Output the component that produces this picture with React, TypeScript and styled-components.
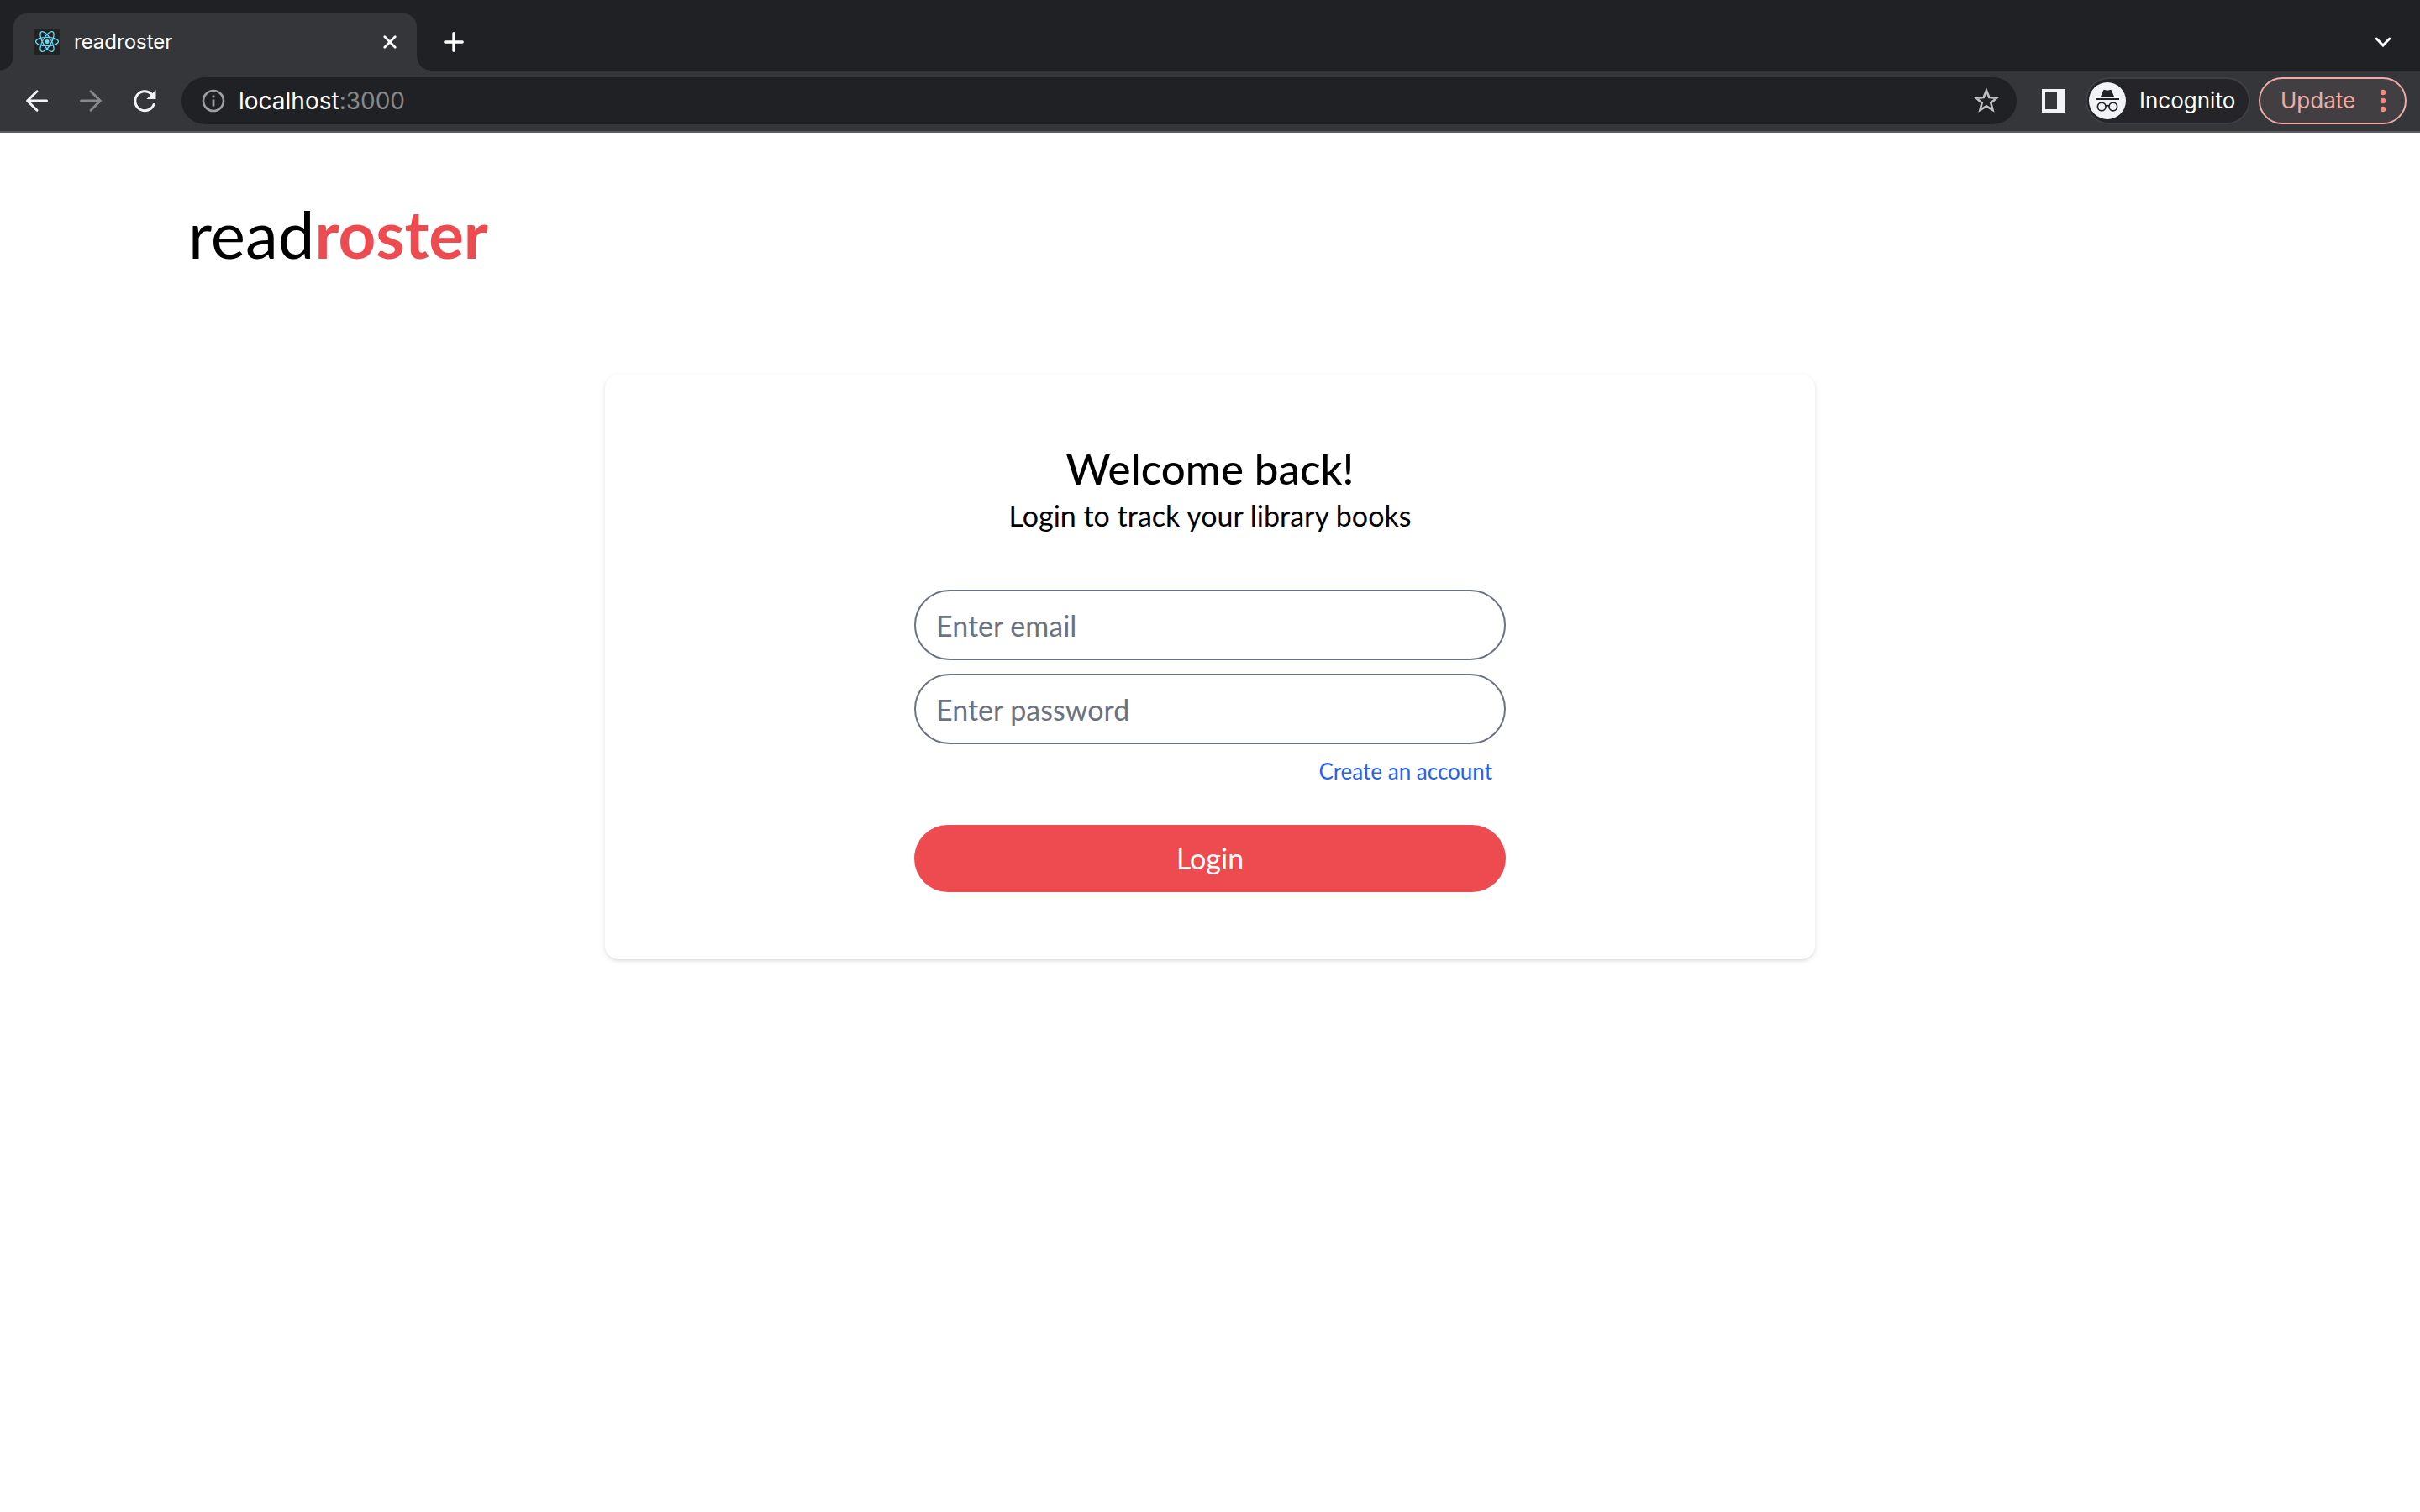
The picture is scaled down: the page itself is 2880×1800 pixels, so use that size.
import React from "react";
import styled, { createGlobalStyle } from "styled-components";

const color = {
  frame: "#202124",
  toolbar: "#35363a",
  toolbarLine: "#5d5e62",
  icon: "#f1f3f4",
  iconDim: "#87888a",
  muted: "#9aa0a6",
  update: "#eeaca5",
  updateDot: "#f28b82",
  brand: "#ee4b50",
  gray: "#6b7280",
  link: "#2563eb",
};

const GlobalStyle = createGlobalStyle`
  *, *::before, *::after { box-sizing: border-box; }
  body { margin: 0; background: #fff; }
  button, input { font: inherit; color: inherit; margin: 0; }
  button { border: 0; padding: 0; background: none; cursor: pointer; }
  svg { display: block; flex: none; }
`;

const Browser = styled.div`
  min-height: 100vh;
  display: flex;
  flex-direction: column;
  font-family: Inter, "Liberation Sans", sans-serif;
`;

const TabStrip = styled.div`
  display: flex;
  align-items: flex-end;
  height: 84px;
  padding: 0 24px 0 16px;
  background: ${color.frame};
`;

const Tab = styled.div`
  position: relative;
  display: flex;
  align-items: center;
  gap: 16px;
  width: 480px;
  height: 68px;
  padding: 0 24px;
  border-radius: 16px 16px 0 0;
  background: ${color.toolbar};
  color: #fff;
  font-size: 24px;
  line-height: 32px;

  &::before,
  &::after {
    content: "";
    position: absolute;
    bottom: 0;
    width: 16px;
    height: 16px;
  }
  &::before {
    right: 100%;
    background: radial-gradient(circle at 0 0, ${color.frame} 15px, ${color.toolbar} 16px);
  }
  &::after {
    left: 100%;
    background: radial-gradient(circle at 100% 0, ${color.frame} 15px, ${color.toolbar} 16px);
  }
`;

const TabTitle = styled.span`
  flex: 1;
`;

const IconButton = styled.button<{ $w?: number; $h?: number; $color?: string }>`
  display: flex;
  align-items: center;
  justify-content: center;
  flex: none;
  width: ${(p) => p.$w ?? 32}px;
  height: ${(p) => p.$h ?? 32}px;
  color: ${(p) => p.$color ?? color.icon};
`;

const Spacer = styled.div`
  flex: 1;
`;

const Toolbar = styled.div`
  display: flex;
  align-items: center;
  height: 74px;
  padding: 0 16px 0 12px;
  border-bottom: 2px solid ${color.toolbarLine};
  background: ${color.toolbar};
  font-size: 26px;
  line-height: 32px;
`;

const Address = styled.div`
  flex: 1;
  display: flex;
  align-items: center;
  gap: 16px;
  height: 56px;
  margin: 0 14px 0 12px;
  padding: 0 20px 0 24px;
  border-radius: 28px;
  background: ${color.frame};
  color: #fff;
`;

const Url = styled.div`
  flex: 1;
  font-size: 28px;
`;

const Port = styled.span`
  color: ${color.iconDim};
`;

const Chip = styled.button`
  display: flex;
  align-items: center;
  gap: 16px;
  width: 196px;
  height: 56px;
  margin-left: 8px;
  padding: 0 2px;
  border: 2px solid #3f4045;
  border-radius: 28px;
  background: #252529;
  color: #fff;
`;

const UpdateButton = styled.button`
  display: flex;
  align-items: center;
  justify-content: space-between;
  width: 176px;
  height: 56px;
  margin-left: 10px;
  padding: 0 22px 0 24px;
  border: 2px solid ${color.update};
  border-radius: 28px;
  background: #423f42;
  color: ${color.update};
`;

const Page = styled.main`
  flex: 1;
  display: flex;
  flex-direction: column;
  align-items: center;
  gap: 128px;
  padding-top: 80px;
  background: #fff;
  color: #000;
  font-family: Lato, "Liberation Sans", sans-serif;
`;

const Header = styled.header`
  display: flex;
  width: 100%;
  padding: 0 224px;
`;

const Logo = styled.a`
  color: #000;
  font-size: 78px;
  line-height: 80px;
  text-decoration: none;

  strong {
    color: ${color.brand};
    font-weight: 700;
  }
`;

const Card = styled.section`
  display: flex;
  flex-direction: column;
  align-items: center;
  width: 50%;
  padding: 80px;
  border-radius: 16px;
  background: #fff;
  box-shadow: 0 2px 6px rgba(0, 0, 0, 0.1), 0 2px 4px -2px rgba(0, 0, 0, 0.1);
`;

const Title = styled.h1`
  margin: 0;
  font-size: 51px;
  font-weight: 500;
  line-height: 64px;
`;

const Subtitle = styled.p`
  margin: 0 0 64px;
  font-size: 34px;
  line-height: 48px;
`;

const Form = styled.form`
  display: flex;
  flex-direction: column;
  gap: 16px;
  width: 55%;
  font-size: 34px;
  line-height: 48px;
`;

const Field = styled.input`
  width: 100%;
  height: 84px;
  padding: 0 24px;
  border: 2px solid ${color.gray};
  border-radius: 42px;
  background: #fff;
  outline: none;

  &::placeholder {
    color: ${color.gray};
    opacity: 1;
  }
`;

const CreateLink = styled.a`
  align-self: flex-end;
  margin: 0 16px 32px 0;
  color: ${color.link};
  font-size: 26px;
  line-height: 32px;
  text-decoration: none;
`;

const Submit = styled.button`
  height: 80px;
  border-radius: 40px;
  background: ${color.brand};
  color: #fff;
`;

const ReactFavicon = () => (
  <svg width="32" height="32" viewBox="0 0 32 32" fill="none" aria-hidden="true">
    <rect width="32" height="32" rx="3" fill="#222" />
    <g stroke="#61dafb" strokeWidth="1.3">
      <ellipse cx="16" cy="15.5" rx="13.4" ry="5.1" />
      <ellipse cx="16" cy="15.5" rx="13.4" ry="5.1" transform="rotate(60 16 15.5)" />
      <ellipse cx="16" cy="15.5" rx="13.4" ry="5.1" transform="rotate(120 16 15.5)" />
    </g>
    <circle cx="16" cy="15.5" r="2.5" fill="#61dafb" />
  </svg>
);

const Arrow = ({ back }: { back?: boolean }) => (
  <svg width="28" height="28" viewBox="0 0 28 28" fill="none" stroke="currentColor" strokeWidth="3" strokeLinecap="round" strokeLinejoin="round">
    <path d={back ? "M25.5 14H3M14 2.8L2.6 14L14 25.2" : "M2.5 14H25M14 2.8L25.4 14L14 25.2"} />
  </svg>
);

const Reload = () => (
  <svg width="28" height="28" viewBox="0 0 28 28" fill="none">
    <path d="M25 18.5A11.5 11.5 0 1 1 22.2 5.8" stroke="currentColor" strokeWidth="3" strokeLinecap="round" />
    <path d="M27.5 1V12H16.5Z" fill="currentColor" />
  </svg>
);

const Info = () => (
  <svg width="28" height="28" viewBox="0 0 28 28" fill="none" aria-hidden="true">
    <circle cx="14" cy="14" r="12" stroke={color.muted} strokeWidth="2.6" />
    <path d="M12.6 12.6h2.8v8h-2.8zM12.6 7.4h2.8v2.8h-2.8z" fill={color.muted} />
  </svg>
);

const Star = () => (
  <svg width="32" height="32" viewBox="0 0 32 32" fill="none">
    <path d="M16 3.8L19.3 12.1L28.2 12.7L21.3 18.4L23.5 27L16 22.3L8.5 27L10.7 18.4L3.8 12.7L12.7 12.1Z" stroke="currentColor" strokeWidth="2.6" />
  </svg>
);

const SidePanel = () => (
  <svg width="28" height="28" viewBox="0 0 28 28">
    <path d="M0 0H28V28H0ZM4 4V24H18V4Z" fill="currentColor" fillRule="evenodd" />
  </svg>
);

const Spy = () => (
  <svg width="44" height="44" viewBox="0 0 44 44" fill="none" aria-hidden="true">
    <circle cx="22" cy="22" r="22" fill="#f1f3f4" />
    <path d="M14 17L17.2 9.6Q17.6 8.6 18.7 8.9L22 9.8L25.3 8.9Q26.4 8.6 26.8 9.6L30 17Z" fill={color.frame} />
    <path d="M8 20H36" stroke={color.frame} strokeWidth="2" />
    <circle cx="15.2" cy="29" r="4.8" stroke={color.frame} strokeWidth="1.7" />
    <circle cx="28.8" cy="29" r="4.8" stroke={color.frame} strokeWidth="1.7" />
    <path d="M20 28.2Q22 27 24 28.2" stroke={color.frame} strokeWidth="1.7" />
  </svg>
);

const Dots = () => (
  <svg width="8" height="28" viewBox="0 0 8 28" fill={color.updateDot} aria-hidden="true">
    <circle cx="4" cy="4" r="3.2" />
    <circle cx="4" cy="14" r="3.2" />
    <circle cx="4" cy="24" r="3.2" />
  </svg>
);

export default function App() {
  return (
    <Browser>
      <GlobalStyle />
      <TabStrip>
        <Tab>
          <ReactFavicon />
          <TabTitle>readroster</TabTitle>
          <IconButton $w={16} aria-label="Close tab">
            <svg width="16" height="16" viewBox="0 0 16 16" stroke="#fff" strokeWidth="2.8" strokeLinecap="round">
              <path d="M1.8 1.8L14.2 14.2M14.2 1.8L1.8 14.2" />
            </svg>
          </IconButton>
        </Tab>
        <IconButton $w={88} $h={68} aria-label="New tab">
          <svg width="24" height="24" viewBox="0 0 24 24" stroke="#fff" strokeWidth="3.4" strokeLinecap="round">
            <path d="M12 1.8V22.2M1.8 12H22.2" />
          </svg>
        </IconButton>
        <Spacer />
        <IconButton $w={40} $h={68} aria-label="Search tabs">
          <svg width="20" height="12" viewBox="0 0 20 12" fill="none" stroke="#fff" strokeWidth="3" strokeLinecap="round">
            <path d="M2.2 2L10 10L17.8 2" />
          </svg>
        </IconButton>
      </TabStrip>

      <Toolbar>
        <IconButton $w={64} $h={56} aria-label="Back"><Arrow back /></IconButton>
        <IconButton $w={64} $h={56} $color={color.iconDim} aria-label="Forward"><Arrow /></IconButton>
        <IconButton $w={64} $h={56} aria-label="Reload"><Reload /></IconButton>
        <Address>
          <Info />
          <Url role="textbox" aria-label="Address">localhost<Port>:3000</Port></Url>
          <IconButton $color="#bdc1c6" aria-label="Bookmark this page"><Star /></IconButton>
        </Address>
        <IconButton $w={60} $h={56} aria-label="Side panel"><SidePanel /></IconButton>
        <Chip><Spy />Incognito</Chip>
        <UpdateButton>Update<Dots /></UpdateButton>
      </Toolbar>

      <Page>
        <Header>
          <Logo href="#">read<strong>roster</strong></Logo>
        </Header>
        <Card>
          <Title>Welcome back!</Title>
          <Subtitle>Login to track your library books</Subtitle>
          <Form onSubmit={(e) => e.preventDefault()}>
            <Field type="email" placeholder="Enter email" aria-label="Enter email" />
            <Field type="password" placeholder="Enter password" aria-label="Enter password" />
            <CreateLink href="#register">Create an account</CreateLink>
            <Submit type="submit">Login</Submit>
          </Form>
        </Card>
      </Page>
    </Browser>
  );
}
